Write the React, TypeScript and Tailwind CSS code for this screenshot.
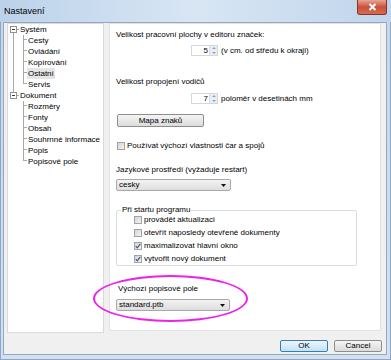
import React from "react";

const ui = "font-['Liberation_Sans',Arial,sans-serif]";
const line = "bg-[#a9a9a9]";

const tree = [
  { label: "Systém", root: true, below: true },
  { label: "Cesty", under: true },
  { label: "Ovládání", under: true },
  { label: "Kopírování", under: true },
  { label: "Ostatní", under: true, selected: true },
  { label: "Servis", under: true, last: true },
  { label: "Dokument", root: true, above: true },
  { label: "Rozměry" },
  { label: "Fonty" },
  { label: "Obsah" },
  { label: "Souhrnné informace" },
  { label: "Popis" },
  { label: "Popisové pole", last: true },
];

type Node = {
  label: string;
  root?: boolean;
  above?: boolean;
  below?: boolean;
  under?: boolean;
  last?: boolean;
  selected?: boolean;
};

function TreeRow({ n }: { n: Node }) {
  if (n.root) {
    return (
      <div className="flex h-[11px] items-center">
        <div className="w-[2px]" />
        <div className="flex h-full w-[7px] flex-col items-center">
          <div className={`h-[2px] w-px ${n.above ? line : ""}`} />
          <div className="flex h-[7px] w-[7px] items-center justify-center border border-[#929292] bg-white">
            <div className="h-px w-[3px] bg-[#3a3a3a]" />
          </div>
          <div className={`w-px flex-1 ${n.below ? line : ""}`} />
        </div>
        <div className={`h-px w-[2px] ${line}`} />
        <span className="whitespace-nowrap pl-[1px] leading-[11px]">{n.label}</span>
      </div>
    );
  }
  return (
    <div className="flex h-[11px] items-stretch">
      <div className="w-[5px]" />
      <div className={`w-px ${n.under ? line : ""}`} />
      <div className="w-[9px]" />
      <div className="flex w-[4px] flex-col">
        <div className="h-[5px] border-b border-l border-[#a9a9a9]" />
        <div className={`flex-1 ${n.last ? "" : "border-l border-[#a9a9a9]"}`} />
      </div>
      <span className={`whitespace-nowrap px-[1px] leading-[11px] ${n.selected ? "bg-[#e5e5e5]" : ""}`}>{n.label}</span>
    </div>
  );
}

function Spin({ value, note }: { value: string; note: string }) {
  return (
    <div className="ml-[75px] flex items-center">
      <div className="flex h-[11px] w-[27px] border border-[#d3d6dc] bg-white">
        <span className="flex-1 pr-[1px] text-right leading-[9px]">{value}</span>
        <div className="flex w-[8px] flex-col border-l border-[#d9dde3] bg-[#e9eef4]">
          <div className="flex flex-1 items-center justify-center">
            <svg width="4" height="2" viewBox="0 0 4 2"><path d="M0 2L2 0L4 2Z" fill="#8fa2bb" /></svg>
          </div>
          <div className="flex flex-1 items-center justify-center">
            <svg width="4" height="2" viewBox="0 0 4 2"><path d="M0 0L2 2L4 0Z" fill="#8fa2bb" /></svg>
          </div>
        </div>
      </div>
      <span className="ml-[3px] leading-[10px]">{note}</span>
    </div>
  );
}

function Check({ checked }: { checked?: boolean }) {
  return (
    <span className="flex h-[8px] w-[8px] shrink-0 items-center justify-center border border-[#a3a3a3] bg-gradient-to-br from-[#d4d4d4] to-[#f4f4f4]">
      {checked && (
        <svg width="6" height="6" viewBox="0 0 6 6">
          <path d="M0.8 3.2L2.3 4.8L5.3 0.8" stroke="#3e5a8c" strokeWidth="1.2" fill="none" />
        </svg>
      )}
    </span>
  );
}

function Select({ value, w }: { value: string; w: string }) {
  return (
    <div className={`flex h-[12px] ${w} items-center rounded-[2px] border border-[#a9a9a9] bg-gradient-to-b from-[#f3f3f3] to-[#dedede] pl-[2px] pr-[4px]`}>
      <span className="flex-1 leading-[10px]">{value}</span>
      <svg width="5" height="3" viewBox="0 0 5 3"><path d="M0 0H5L2.5 3Z" fill="#111" /></svg>
    </div>
  );
}

export default function App() {
  return (
    <div className={`relative flex h-[360px] w-[391px] flex-col overflow-hidden bg-gradient-to-b from-[#c3d7ed] to-[#d2e1f1] text-[8px] text-black shadow-[inset_0_0_0_1px_#8ea7c4] ${ui}`}>
      {/* title bar */}
      <div className="flex h-[22px] bg-gradient-to-r from-[#bcd2ea] via-[#d8e6f4] to-[#c0d5ec]">
        <span className="pl-[4px] pt-[6px] text-[9px] leading-[10px]">Nastavení</span>
        <div className="ml-auto mr-[4px] flex h-[15px] w-[30px] items-center justify-center rounded-b-[3px] border border-t-0 border-[#8a3324] bg-gradient-to-b from-[#e8a493] via-[#c8513a] to-[#d86a50]">
          <svg width="9" height="8" viewBox="0 0 9 8">
            <path d="M1.5 1L7.5 7M7.5 1L1.5 7" stroke="white" strokeWidth="2" />
          </svg>
        </div>
      </div>

      {/* body */}
      <div className="ml-[3px] mr-[4px] flex h-[333px] flex-col border border-[#96a8be] bg-[#f0f0f0]">
        <div className="flex items-start gap-[5px] px-[3px]">
          {/* tree */}
          <div className="h-[310px] w-[97px] overflow-hidden border border-[#dadada] bg-white text-[8px]">
            {tree.map((n) => (
              <TreeRow key={n.label} n={n} />
            ))}
          </div>

          {/* settings page */}
          <div className="flex h-[308px] w-[272px] flex-col border border-[#e2e2e2] bg-white pl-[6px]">
            <p className="mt-[6px] leading-[10px]">Velikost pracovní plochy v editoru značek:</p>
            <div className="mt-[5px]">
              <Spin value="5" note="(v cm. od středu k okraji)" />
            </div>
            <p className="mt-[21px] leading-[10px]">Velikost propojení vodičů</p>
            <div className="mt-[6px]">
              <Spin value="7" note="poloměr v desetinách mm" />
            </div>
            <button className="ml-[1px] mt-[10px] h-[13px] w-[87px] rounded-[2px] border border-[#8e8e8e] bg-gradient-to-b from-[#f4f4f4] to-[#dcdcdc] leading-[10px]">
              Mapa znaků
            </button>
            <label className="ml-[1px] mt-[14px] flex items-center gap-[2px] leading-[10px]">
              <Check />
              Používat výchozí vlastnosti čar a spojů
            </label>
            <p className="mt-[14px] leading-[10px]">Jazykové prostředí (vyžaduje restart)</p>
            <div className="mt-[4px]">
              <Select value="cesky" w="w-[115px]" />
            </div>
            <fieldset className="mt-[16px] w-[241px] rounded-[2px] border border-[#d8dde2] pl-[17px]">
              <legend className="-ml-[13px] px-[1px] leading-[6px]">Při startu programu</legend>
              {[
                ["provádět aktualizaci", false],
                ["otevřít naposledy otevřené dokumenty", false],
                ["maximalizovat hlavní okno", true],
                ["vytvořit nový dokument", true],
              ].map(([t, c]) => (
                <label key={t as string} className="flex h-[13px] items-center gap-[2px] leading-[10px]">
                  <Check checked={c as boolean} />
                  {t as string}
                </label>
              ))}
            </fieldset>
            <p className="ml-[2px] mt-[18px] leading-[10px]">Výchozí popisové pole</p>
            <div className="mt-[5px]">
              <Select value="standard.ptb" w="w-[114px]" />
            </div>
          </div>
        </div>

        {/* dialog buttons */}
        <div className="mr-[4px] mt-[7px] flex justify-end gap-[6px]">
          <button className="h-[12px] w-[48px] rounded-[2px] border border-[#3d7bad] bg-gradient-to-b from-[#ecf6fd] to-[#bfe2f8] leading-[10px]">
            OK
          </button>
          <button className="h-[12px] w-[48px] rounded-[2px] border border-[#8e8e8e] bg-gradient-to-b from-[#f4f4f4] to-[#dcdcdc] leading-[10px]">
            Cancel
          </button>
        </div>
      </div>

      {/* magenta annotation */}
      <div className="absolute left-[93px] top-[275px] h-[47px] w-[155px] rounded-[50%] border-2 border-[#ee22e6]" />
    </div>
  );
}
